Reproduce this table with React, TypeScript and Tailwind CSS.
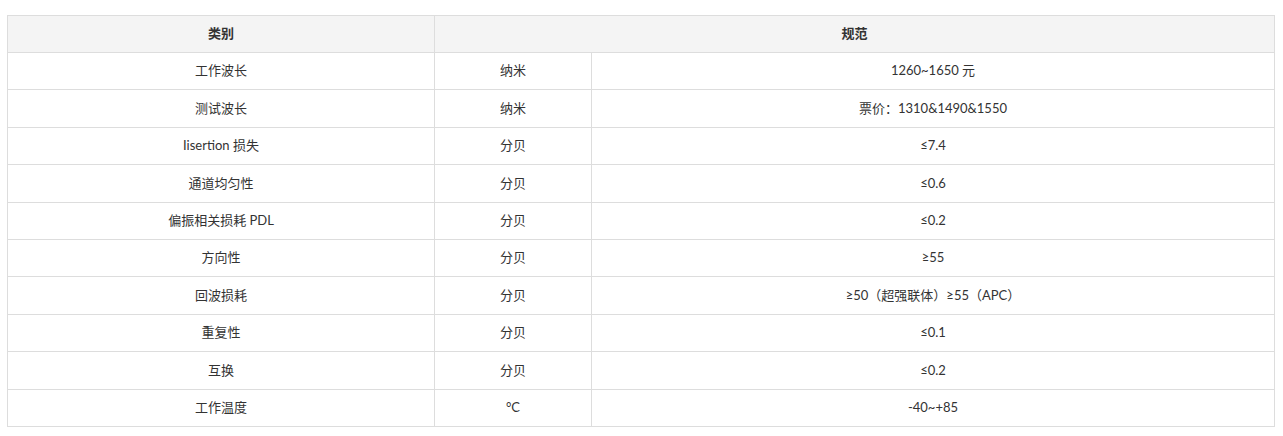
const rows = [
  { name: '工作波长', unit: '纳米', spec: '1260~1650 元' },
  { name: '测试波长', unit: '纳米', spec: '票价：1310&1490&1550' },
  { name: 'Iisertion 损失', unit: '分贝', spec: '≤7.4' },
  { name: '通道均匀性', unit: '分贝', spec: '≤0.6' },
  { name: '偏振相关损耗 PDL', unit: '分贝', spec: '≤0.2' },
  { name: '方向性', unit: '分贝', spec: '≥55' },
  { name: '回波损耗', unit: '分贝', spec: '≥50（超强联体）≥55（APC）' },
  { name: '重复性', unit: '分贝', spec: '≤0.1' },
  { name: '互换', unit: '分贝', spec: '≤0.2' },
  { name: '工作温度', unit: '°C', spec: '-40~+85' },
]

export default function App() {
  return (
    <div className="bg-white pt-[15px] px-[7px] h-[436px] font-['Lato','Noto_Sans_CJK_SC',sans-serif] text-[13px] text-[#333]">
      <table className="w-[1268px] border-collapse table-fixed border border-[#dddddd]">
        <colgroup>
          <col className="w-[427px]" />
          <col className="w-[157px]" />
          <col />
        </colgroup>
        <thead>
          <tr className="h-[37px] bg-[#f4f4f4]">
            <th className="border border-[#dddddd] font-bold text-center">类别</th>
            <th colSpan={2} className="border border-[#dddddd] font-bold text-center">规范</th>
          </tr>
        </thead>
        <tbody>
          {rows.map((r) => (
            <tr key={r.name} className="h-[37.4px]">
              <td className="border border-[#dddddd] text-center">{r.name}</td>
              <td className="border border-[#dddddd] text-center">{r.unit}</td>
              <td className="border border-[#dddddd] text-center">{r.spec}</td>
            </tr>
          ))}
        </tbody>
      </table>
    </div>
  )
}
